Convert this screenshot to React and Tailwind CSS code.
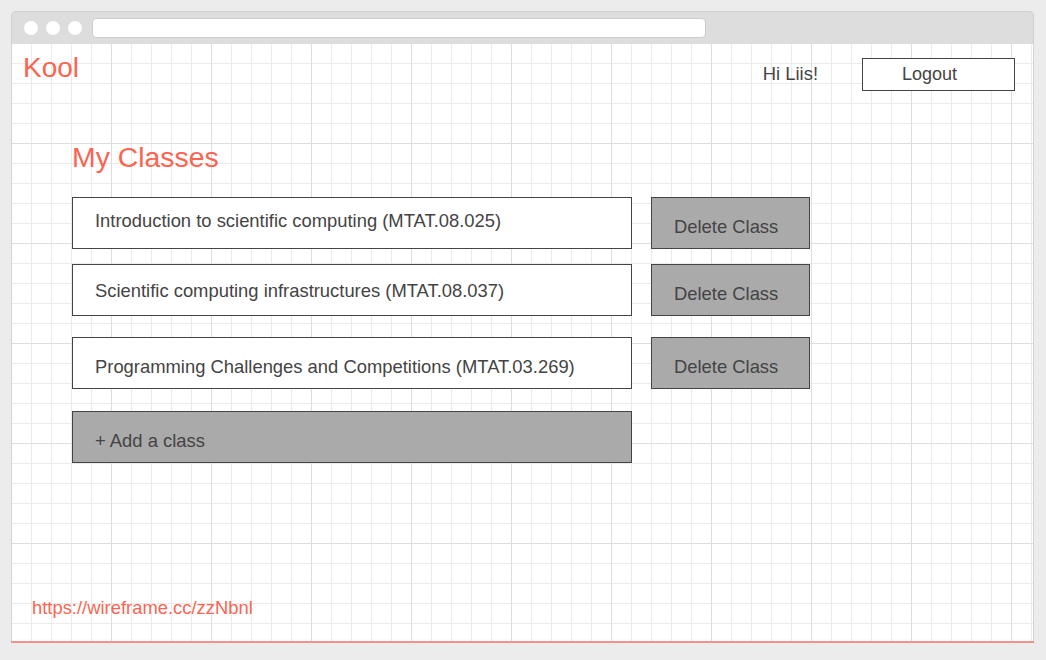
export default function App() {
  const rows = [
    { name: "Introduction to scientific computing (MTAT.08.025)", mt: "mt-0", pt: "pt-[14px]" },
    { name: "Scientific computing infrastructures (MTAT.08.037)", mt: "mt-[15px]", pt: "pt-[17px]" },
    { name: "Programming Challenges and Competitions (MTAT.03.269)", mt: "mt-[21px]", pt: "pt-[20px]" },
  ];
  return (
    <div className="min-h-[660px] w-[1046px] bg-[#ececec] pt-[11px] pl-[11px] font-['Liberation_Sans',Arial,sans-serif] text-[#444]">
      <div className="w-[1023px]">
        {/* browser title bar */}
        <div className="box-border flex h-[32px] items-center rounded-t-[5px] border border-b-0 border-[#d0d0d0] bg-[#dddddd]">
          <div className="ml-[12px] flex gap-[8px]">
            <span className="block h-[14px] w-[14px] rounded-full bg-white" />
            <span className="block h-[14px] w-[14px] rounded-full bg-white" />
            <span className="block h-[14px] w-[14px] rounded-full bg-white" />
          </div>
          <div className="ml-[10px] box-border h-[20px] w-[614px] rounded-[4px] border border-[#cccccc] bg-white" />
        </div>
        {/* canvas */}
        <div className="box-border flex h-[600px] flex-col border-b-2 border-[#f3928a] bg-white [background-image:linear-gradient(to_right,#dedede_1px,transparent_1px),linear-gradient(to_bottom,#dedede_1px,transparent_1px),linear-gradient(to_right,#ebebeb_1px,transparent_1px),linear-gradient(to_bottom,#ebebeb_1px,transparent_1px)] [background-size:100px_100px,100px_100px,20px_20px,20px_20px] shadow-[inset_1px_0_0_#d4d4d4,inset_-1px_0_0_#d4d4d4]">
          {/* header row */}
          <div className="flex h-[48px] items-start">
            <div className="ml-[12px] mt-[11px] text-[28px] leading-[28px] text-[#fc6450]">Kool</div>
            <div className="ml-auto mt-[22px] text-[18.4px] leading-[18px]">Hi Liis!</div>
            <div className="ml-[44px] mr-[19px] mt-[15px] box-border h-[33px] w-[153px] border border-[#444] bg-white pl-[39px] pt-[6px] text-[18px] leading-[18px]">
              Logout
            </div>
          </div>
          {/* main */}
          <div className="ml-[61px] mt-[52px] flex flex-col">
            <h1 className="text-[28.4px] leading-[28px] font-normal text-[#fc6450]">My Classes</h1>
            <div className="mt-[26px] flex flex-col">
              {rows.map((r) => (
                <div key={r.name} className={`flex gap-[19px] ${r.mt}`}>
                  <div className={`box-border h-[52px] w-[560px] border border-[#444] bg-white pl-[22px] text-[18.4px] leading-[18px] ${r.pt}`}>
                    {r.name}
                  </div>
                  <div className="box-border h-[52px] w-[159px] border border-[#444] bg-[#aaaaaa] pl-[22px] pt-[20px] text-[18.4px] leading-[18px]">
                    Delete Class
                  </div>
                </div>
              ))}
              <div className="mt-[22px] box-border h-[52px] w-[560px] border border-[#444] bg-[#aaaaaa] pl-[22px] pt-[20px] text-[18.4px] leading-[18px]">
                + Add a class
              </div>
            </div>
          </div>
          <div className="ml-[21px] mb-[24px] mt-auto text-[18.4px] leading-[18px] text-[#f96552]">
            https://wireframe.cc/zzNbnl
          </div>
        </div>
      </div>
    </div>
  );
}
